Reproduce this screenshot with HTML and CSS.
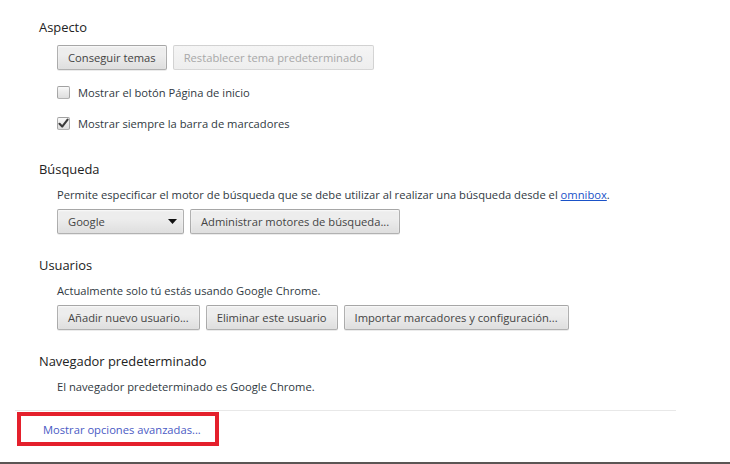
FILE: index.html
```html
<!DOCTYPE html>
<html lang="es">
<head>
<meta charset="utf-8">
<link rel="stylesheet" href="styles.css">
</head>
<body>
<div class="screen">
  <div class="sections">
    <section class="sec sec-aspect">
      <h3 class="title">Aspecto</h3>
      <div class="content">
        <div class="btn-row">
          <button class="btn">Conseguir temas</button>
          <button class="btn" disabled>Restablecer tema predeterminado</button>
        </div>
        <label class="check-row first">
          <span class="check"></span>
          <span>Mostrar el botón Página de inicio</span>
        </label>
        <label class="check-row">
          <span class="check">
            <svg width="11" height="11" viewBox="0 0 11 11"><path d="M1.5 5.8 L4.2 8.6 L9.6 1.6" fill="none" stroke="#3a3a3a" stroke-width="2.1" stroke-linecap="round" stroke-linejoin="round"/></svg>
          </span>
          <span>Mostrar siempre la barra de marcadores</span>
        </label>
      </div>
    </section>

    <section class="sec">
      <h3 class="title">Búsqueda</h3>
      <div class="content">
        <p class="desc">Permite especificar el motor de búsqueda que se debe utilizar al realizar una búsqueda desde el <a class="link" href="#">omnibox</a>.</p>
        <div class="btn-row">
          <div class="select">
            <span>Google</span>
            <svg class="caret" width="9" height="5" viewBox="0 0 9 5"><path d="M0 0 H9 L4.5 5 Z" fill="#111"/></svg>
          </div>
          <button class="btn">Administrar motores de búsqueda...</button>
        </div>
      </div>
    </section>

    <section class="sec">
      <h3 class="title">Usuarios</h3>
      <div class="content">
        <p class="desc">Actualmente solo tú estás usando Google Chrome.</p>
        <div class="btn-row">
          <button class="btn">Añadir nuevo usuario...</button>
          <button class="btn">Eliminar este usuario</button>
          <button class="btn">Importar marcadores y configuración...</button>
        </div>
      </div>
    </section>

    <section class="sec last">
      <h3 class="title">Navegador predeterminado</h3>
      <div class="content">
        <p class="desc">El navegador predeterminado es Google Chrome.</p>
      </div>
    </section>
  </div>

  <div class="separator"></div>

  <div class="footer">
    <div class="highlight">
      <a class="adv-link" href="#">Mostrar opciones avanzadas...</a>
    </div>
  </div>
</div>
</body>
</html>
```

FILE: styles.css
```css
html, body {
  margin: 0;
  padding: 0;
  background: #ffffff;
}

body {
  font-family: "Open Sans", "Noto Sans", "Liberation Sans", sans-serif;
  font-size: 11.2px;
  color: #303942;
}

.screen {
  width: 730px;
  height: 464px;
  box-sizing: border-box;
  border-bottom: 2px solid #5b5654;
  display: flex;
  flex-direction: column;
  overflow: hidden;
}

.sections {
  padding: 18px 0 0 39px;
  display: flex;
  flex-direction: column;
}

.sec {
  margin-bottom: 22px;
}

.sec-aspect {
  margin-bottom: 27px;
}

.sec.last {
  margin-bottom: 0;
}

.title {
  margin: 0;
  height: 18px;
  line-height: 18px;
  font-size: 12.9px;
  font-weight: normal;
  color: #222222;
}

.content {
  margin-left: 18px;
  display: flex;
  flex-direction: column;
}

.desc {
  margin: 9px 0 0 0;
  height: 16px;
  line-height: 16px;
}

.btn-row {
  margin-top: 6px;
  display: flex;
  gap: 6px;
  height: 25px;
}

.sec-aspect .btn-row {
  margin-top: 9px;
}

.btn {
  font-family: inherit;
  font-size: 11.2px;
  color: #444444;
  height: 25px;
  padding: 0 10px;
  margin: 0;
  border: 1px solid rgba(0, 0, 0, 0.25);
  border-radius: 2px;
  background: linear-gradient(#ededed, #ededed 38%, #dedede);
  box-shadow: 0 1px 0 rgba(0, 0, 0, 0.08), inset 0 1px 2px rgba(255, 255, 255, 0.75);
}

.btn:disabled {
  color: #a8a8a8;
  border-color: rgba(0, 0, 0, 0.12);
  background: linear-gradient(#f5f5f5, #f2f2f2 38%, #eeeeee);
  box-shadow: none;
}

.select {
  box-sizing: border-box;
  width: 127px;
  height: 25px;
  padding: 0 5px 0 10px;
  display: flex;
  align-items: center;
  justify-content: space-between;
  color: #444444;
  border: 1px solid rgba(0, 0, 0, 0.25);
  border-radius: 2px;
  background: linear-gradient(#ededed, #ededed 38%, #dedede);
  box-shadow: 0 1px 0 rgba(0, 0, 0, 0.08), inset 0 1px 2px rgba(255, 255, 255, 0.75);
}

.caret {
  margin-right: 1px;
}

.check-row {
  display: flex;
  align-items: center;
  gap: 8px;
  height: 20px;
  margin-top: 11px;
}

.check-row.first {
  margin-top: 12px;
}

.check {
  box-sizing: border-box;
  width: 13px;
  height: 13px;
  border: 1px solid rgba(0, 0, 0, 0.28);
  border-radius: 2px;
  background: linear-gradient(#fafafa, #ededed 38%, #dedede);
  display: flex;
  align-items: center;
  justify-content: center;
}

.link {
  color: #1a52c8;
  text-decoration: underline;
}

.separator {
  margin: 15px 0 0 15px;
  width: 661px;
  height: 1px;
  background: #e8e8e8;
}

.footer {
  padding: 1px 0 0 17px;
}

.highlight {
  box-sizing: border-box;
  width: 202px;
  height: 34px;
  border: 4px solid #e4202c;
  display: flex;
  align-items: center;
  padding-left: 22px;
}

.adv-link {
  color: #4a5ac4;
  text-decoration: none;
  font-size: 11.2px;
}
```
